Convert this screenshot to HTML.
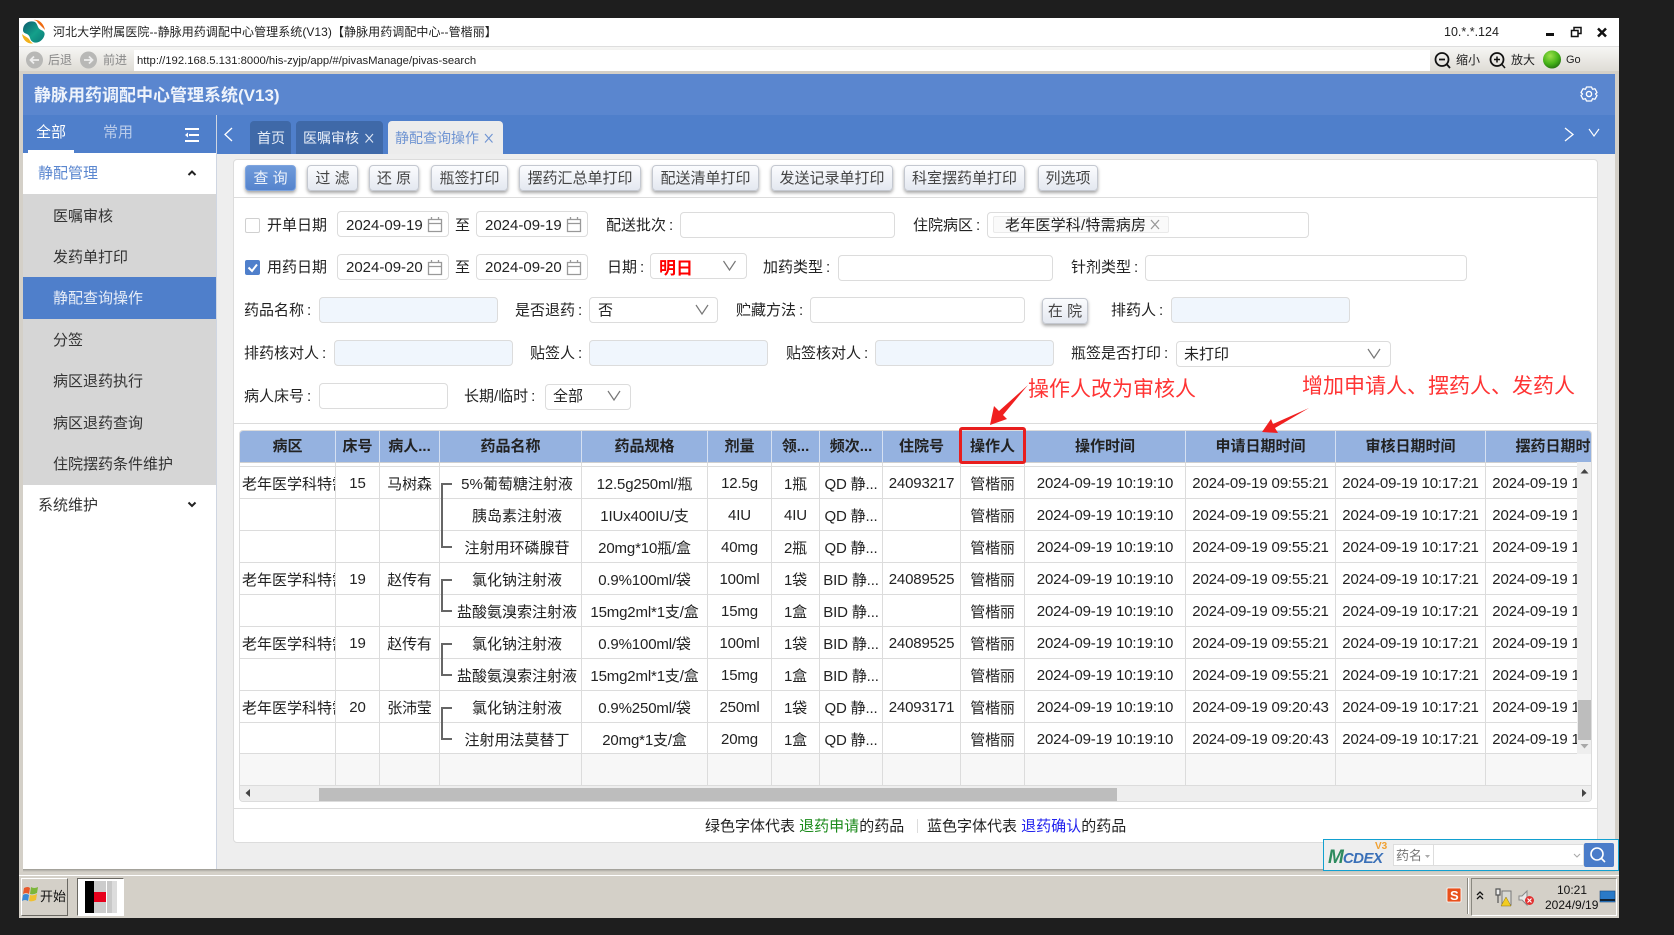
<!DOCTYPE html>
<html lang="zh"><head><meta charset="utf-8"><title>静脉用药调配中心管理系统</title>
<style>
html,body{margin:0;padding:0;width:1674px;height:935px;overflow:hidden;background:#1e1e1e}
body{position:relative;font-family:"Liberation Sans","Noto Sans CJK SC",sans-serif;font-size:15px;color:#222}
div,span.a{box-sizing:border-box}
.b{position:absolute}
.t{position:absolute;white-space:nowrap;line-height:20px;height:20px;margin-top:1px}
.i{position:absolute;background:#fff;border:1px solid #dcdcdc;border-radius:4px;height:26px}
.q{background:#f0f6fd}
.btn{position:absolute;top:165px;height:26px;border:1px solid #c4c8d0;border-radius:4px;background:linear-gradient(#fbfcfe,#e4e8f0);box-shadow:0 2px 3px rgba(0,0,0,.35);text-align:center;line-height:26px;color:#444;white-space:nowrap}
.side{position:absolute;left:53px;white-space:nowrap;line-height:20px;color:#333;margin-top:1px}
table{border-collapse:separate;border-spacing:0;table-layout:fixed;width:1396px;position:absolute;left:0;top:0}
th{background:#95b2e0;height:31px;padding:0 0 2px;font-size:15px;font-weight:bold;color:#222;border-right:1px solid #d5e0f2;white-space:nowrap;overflow:hidden;box-sizing:border-box}
td{height:32px;padding:2px 0 0;border-right:1px solid #dcdcdc;border-bottom:1px solid #dcdcdc;text-align:center;white-space:nowrap;overflow:hidden;box-sizing:border-box;font-size:15px;letter-spacing:-.15px;color:#222}
tr.sp td{height:5px;padding:0;border-top:1px solid #d0d0d0}
tr.la td{height:31px}
tr.fo td{background:#f7f7f7;height:32px}
td.w{text-align:left;padding-left:2px;letter-spacing:0}
td.n{padding-left:13px;letter-spacing:0}
</style></head><body>

<!-- window chrome -->
<div class="b" style="left:19px;top:18px;width:1600px;height:900px;background:#d4d0c8"></div>
<div class="b" style="left:19px;top:18px;width:1600px;height:28px;background:#fff"></div>
<div class="b" style="left:19px;top:46px;width:1600px;height:1px;background:#dedede"></div>
<div class="b" style="left:19px;top:47px;width:1600px;height:27px;background:linear-gradient(#f6f6f4,#dcd9d2)"></div>
<div class="b" style="left:19px;top:71px;width:1600px;height:3px;background:#d4d0c8"></div>
<div class="b" style="left:134px;top:50px;width:1296px;height:21px;background:#fff"></div>

<div class="t" style="left:53px;top:21px;font-size:12px;letter-spacing:.06px;color:#222">河北大学附属医院--静脉用药调配中心管理系统(V13)【静脉用药调配中心--管楷丽】</div>
<div class="t" style="left:1444px;top:21px;font-size:12.5px;color:#222">10.*.*.124</div>
<div class="t" style="left:48px;top:49px;font-size:12px;color:#888">后退</div>
<div class="t" style="left:103px;top:49px;font-size:12px;color:#888">前进</div>
<div class="t" style="left:137px;top:50px;font-size:11.3px;color:#222">http://192.168.5.131:8000/his-zyjp/app/#/pivasManage/pivas-search</div>
<div class="t" style="left:1456px;top:49px;font-size:12px;color:#222">缩小</div>
<div class="t" style="left:1511px;top:49px;font-size:12px;color:#222">放大</div>
<div class="t" style="left:1566px;top:49px;font-size:11px;color:#222">Go</div>

<!-- app frame -->
<div class="b" style="left:23px;top:74px;width:1592px;height:41px;background:#5a86cf"></div>
<div class="b" style="left:23px;top:115px;width:1592px;height:39px;background:#4f7fcb"></div>
<div class="b" style="left:23px;top:154px;width:1592px;height:715px;background:#eeeeee"></div>
<div class="b" style="left:23px;top:869px;width:1592px;height:3px;background:linear-gradient(#9b9992,#d4d0c8)"></div>
<div class="b" style="left:19px;top:875px;width:1600px;height:1px;background:#fff"></div>
<div class="t" style="left:34px;top:85px;font-size:17px;font-weight:bold;color:#eef3fb">静脉用药调配中心管理系统(V13)</div>

<!-- sidebar -->
<div class="b" style="left:23px;top:153px;width:193px;height:716px;background:#fff"></div>
<div class="b" style="left:216px;top:115px;width:1px;height:754px;background:#cfd6e2"></div>
<div class="b" style="left:23px;top:194px;width:193px;height:291px;background:#d6d6d6"></div>
<div class="b" style="left:23px;top:277px;width:193px;height:42px;background:#4f7fcb"></div>
<div class="b" style="left:28px;top:150px;width:46px;height:3px;background:#fff"></div>
<div class="t" style="left:36px;top:122px;color:#fff">全部</div>
<div class="t" style="left:103px;top:122px;color:#b9cbea">常用</div>
<div class="side" style="left:38px;top:163px;color:#5a86cf">静配管理</div>
<div class="side" style="top:206px">医嘱审核</div>
<div class="side" style="top:247px">发药单打印</div>
<div class="side" style="top:288px;color:#e8eef8">静配查询操作</div>
<div class="side" style="top:330px">分签</div>
<div class="side" style="top:371px">病区退药执行</div>
<div class="side" style="top:413px">病区退药查询</div>
<div class="side" style="top:454px">住院摆药条件维护</div>
<div class="side" style="left:38px;top:495px">系统维护</div>

<!-- tabs -->
<div class="b" style="left:250px;top:121px;width:41px;height:33px;background:#3f69a8;border-radius:4px 4px 0 0"></div>
<div class="b" style="left:296px;top:121px;width:87px;height:33px;background:#3f69a8;border-radius:4px 4px 0 0"></div>
<div class="b" style="left:388px;top:121px;width:115px;height:33px;background:#ececec;border-radius:4px 4px 0 0"></div>
<div class="t" style="left:257px;top:127px;font-size:14px;color:#e8eef8">首页</div>
<div class="t" style="left:303px;top:127px;font-size:14px;color:#e8eef8">医嘱审核</div>
<div class="t" style="left:395px;top:127px;font-size:14px;color:#6f94d2">静配查询操作</div>

<!-- card -->
<div class="b" style="left:233px;top:159px;width:1365px;height:684px;background:#fff;border:1px solid #dcdcdc;border-radius:4px"></div>
<div class="b" style="left:234px;top:197px;width:1363px;height:1px;background:#dcdcdc"></div>
<div class="b" style="left:234px;top:423px;width:1363px;height:1px;background:#dcdcdc"></div>
<div class="b" style="left:234px;top:808px;width:1363px;height:1px;background:#dcdcdc"></div>

<div class="btn" style="left:245px;width:51px;background:linear-gradient(#6f9ada,#5584cd);border-color:#7ea4de;color:#eef3fb">查 询</div>
<div class="btn" style="left:307px;width:51px">过 滤</div>
<div class="btn" style="left:369px;width:50px">还 原</div>
<div class="btn" style="left:431px;width:77px">瓶签打印</div>
<div class="btn" style="left:519px;width:122px">摆药汇总单打印</div>
<div class="btn" style="left:652px;width:107px">配送清单打印</div>
<div class="btn" style="left:771px;width:122px">发送记录单打印</div>
<div class="btn" style="left:904px;width:121px">科室摆药单打印</div>
<div class="btn" style="left:1038px;width:60px">列选项</div>

<!-- form row 1 -->
<div class="b" style="left:245px;top:218px;width:15px;height:15px;background:#fff;border:1px solid #d0d0d0;border-radius:2px"></div>
<div class="t" style="left:267px;top:215px">开单日期</div>
<div class="i" style="left:337px;top:211px;width:112px"></div>
<div class="t" style="left:346px;top:215px">2024-09-19</div>
<div class="t" style="left:455px;top:215px">至</div>
<div class="i" style="left:476px;top:211px;width:112px"></div>
<div class="t" style="left:485px;top:215px">2024-09-19</div>
<div class="t" style="left:606px;top:215px">配送批次&#8201;:</div>
<div class="i" style="left:680px;top:212px;width:215px"></div>
<div class="t" style="left:913px;top:215px">住院病区&#8201;:</div>
<div class="i" style="left:987px;top:212px;width:322px"></div>
<div class="b" style="left:993px;top:216px;width:176px;height:17px;background:#fafafa;border:1px solid #eaeaea;border-radius:2px"></div>
<div class="t" style="left:1005px;top:215px;letter-spacing:.2px">老年医学科/特需病房</div>

<!-- form row 2 -->
<div class="b" style="left:245px;top:260px;width:15px;height:15px;background:#4f7fcb;border-radius:2px"></div>
<div class="t" style="left:267px;top:257px">用药日期</div>
<div class="i" style="left:337px;top:254px;width:112px"></div>
<div class="t" style="left:346px;top:257px">2024-09-20</div>
<div class="t" style="left:455px;top:257px">至</div>
<div class="i" style="left:476px;top:254px;width:112px"></div>
<div class="t" style="left:485px;top:257px">2024-09-20</div>
<div class="t" style="left:607px;top:257px">日期&#8201;:</div>
<div class="i" style="left:650px;top:253px;width:97px"></div>
<div class="t" style="left:659px;top:258px;font-size:17px;font-weight:bold;color:#f00">明日</div>
<div class="t" style="left:763px;top:257px">加药类型&#8201;:</div>
<div class="i" style="left:838px;top:255px;width:215px"></div>
<div class="t" style="left:1071px;top:257px">针剂类型&#8201;:</div>
<div class="i" style="left:1145px;top:255px;width:322px"></div>

<!-- form row 3 -->
<div class="t" style="left:244px;top:300px">药品名称&#8201;:</div>
<div class="i q" style="left:319px;top:297px;width:179px"></div>
<div class="t" style="left:515px;top:300px">是否退药&#8201;:</div>
<div class="i" style="left:589px;top:297px;width:129px"></div>
<div class="t" style="left:598px;top:300px">否</div>
<div class="t" style="left:736px;top:300px">贮藏方法&#8201;:</div>
<div class="i" style="left:810px;top:297px;width:215px"></div>
<div class="btn" style="left:1042px;top:298px;width:46px">在 院</div>
<div class="t" style="left:1111px;top:300px">排药人&#8201;:</div>
<div class="i q" style="left:1171px;top:297px;width:179px"></div>

<!-- form row 4 -->
<div class="t" style="left:244px;top:343px">排药核对人&#8201;:</div>
<div class="i q" style="left:334px;top:340px;width:179px"></div>
<div class="t" style="left:530px;top:343px">贴签人&#8201;:</div>
<div class="i q" style="left:589px;top:340px;width:179px"></div>
<div class="t" style="left:786px;top:343px">贴签核对人&#8201;:</div>
<div class="i q" style="left:875px;top:340px;width:179px"></div>
<div class="t" style="left:1071px;top:343px">瓶签是否打印&#8201;:</div>
<div class="i" style="left:1176px;top:341px;width:215px"></div>
<div class="t" style="left:1184px;top:344px">未打印</div>

<!-- form row 5 -->
<div class="t" style="left:244px;top:386px">病人床号&#8201;:</div>
<div class="i" style="left:319px;top:383px;width:129px"></div>
<div class="t" style="left:464px;top:386px">长期/临时&#8201;:</div>
<div class="i" style="left:545px;top:384px;width:86px"></div>
<div class="t" style="left:553px;top:386px">全部</div>

<!-- grid -->
<div class="b" style="left:239px;top:430px;width:1353px;height:372px;border:1px solid #dcdcdc;border-radius:4px;overflow:hidden;background:#fff">
<table>
<colgroup><col style="width:96px"><col style="width:44px"><col style="width:60px"><col style="width:142px"><col style="width:126px"><col style="width:64px"><col style="width:48px"><col style="width:63px"><col style="width:78px"><col style="width:64px"><col style="width:161px"><col style="width:150px"><col style="width:150px"><col style="width:150px"></colgroup>
<tr><th>病区</th><th>床号</th><th>病人...</th><th>药品名称</th><th>药品规格</th><th>剂量</th><th>领...</th><th>频次...</th><th>住院号</th><th>操作人</th><th>操作时间</th><th>申请日期时间</th><th>审核日期时间</th><th>摆药日期时间</th></tr>
<tr class="sp"><td></td><td></td><td></td><td></td><td></td><td></td><td></td><td></td><td></td><td></td><td></td><td></td><td></td><td></td></tr>
<tr><td class="w">老年医学科特需病房</td><td>15</td><td>马树森</td><td class="n">5%葡萄糖注射液</td><td>12.5g250ml/瓶</td><td>12.5g</td><td>1瓶</td><td>QD 静...</td><td>24093217</td><td>管楷丽</td><td>2024-09-19 10:19:10</td><td>2024-09-19 09:55:21</td><td>2024-09-19 10:17:21</td><td>2024-09-19 10:19:10</td></tr>
<tr><td></td><td></td><td></td><td class="n">胰岛素注射液</td><td>1IUx400IU/支</td><td>4IU</td><td>4IU</td><td>QD 静...</td><td></td><td>管楷丽</td><td>2024-09-19 10:19:10</td><td>2024-09-19 09:55:21</td><td>2024-09-19 10:17:21</td><td>2024-09-19 10:19:10</td></tr>
<tr><td></td><td></td><td></td><td class="n">注射用环磷腺苷</td><td>20mg*10瓶/盒</td><td>40mg</td><td>2瓶</td><td>QD 静...</td><td></td><td>管楷丽</td><td>2024-09-19 10:19:10</td><td>2024-09-19 09:55:21</td><td>2024-09-19 10:17:21</td><td>2024-09-19 10:19:10</td></tr>
<tr><td class="w">老年医学科特需病房</td><td>19</td><td>赵传有</td><td class="n">氯化钠注射液</td><td>0.9%100ml/袋</td><td>100ml</td><td>1袋</td><td>BID 静...</td><td>24089525</td><td>管楷丽</td><td>2024-09-19 10:19:10</td><td>2024-09-19 09:55:21</td><td>2024-09-19 10:17:21</td><td>2024-09-19 10:19:10</td></tr>
<tr><td></td><td></td><td></td><td class="n">盐酸氨溴索注射液</td><td>15mg2ml*1支/盒</td><td>15mg</td><td>1盒</td><td>BID 静...</td><td></td><td>管楷丽</td><td>2024-09-19 10:19:10</td><td>2024-09-19 09:55:21</td><td>2024-09-19 10:17:21</td><td>2024-09-19 10:19:10</td></tr>
<tr><td class="w">老年医学科特需病房</td><td>19</td><td>赵传有</td><td class="n">氯化钠注射液</td><td>0.9%100ml/袋</td><td>100ml</td><td>1袋</td><td>BID 静...</td><td>24089525</td><td>管楷丽</td><td>2024-09-19 10:19:10</td><td>2024-09-19 09:55:21</td><td>2024-09-19 10:17:21</td><td>2024-09-19 10:19:10</td></tr>
<tr><td></td><td></td><td></td><td class="n">盐酸氨溴索注射液</td><td>15mg2ml*1支/盒</td><td>15mg</td><td>1盒</td><td>BID 静...</td><td></td><td>管楷丽</td><td>2024-09-19 10:19:10</td><td>2024-09-19 09:55:21</td><td>2024-09-19 10:17:21</td><td>2024-09-19 10:19:10</td></tr>
<tr><td class="w">老年医学科特需病房</td><td>20</td><td>张沛莹</td><td class="n">氯化钠注射液</td><td>0.9%250ml/袋</td><td>250ml</td><td>1袋</td><td>QD 静...</td><td>24093171</td><td>管楷丽</td><td>2024-09-19 10:19:10</td><td>2024-09-19 09:20:43</td><td>2024-09-19 10:17:21</td><td>2024-09-19 10:19:10</td></tr>
<tr class="la"><td></td><td></td><td></td><td class="n">注射用法莫替丁</td><td>20mg*1支/盒</td><td>20mg</td><td>1盒</td><td>QD 静...</td><td></td><td>管楷丽</td><td>2024-09-19 10:19:10</td><td>2024-09-19 09:20:43</td><td>2024-09-19 10:17:21</td><td>2024-09-19 10:19:10</td></tr>
<tr class="fo"><td></td><td></td><td></td><td></td><td></td><td></td><td></td><td></td><td></td><td></td><td></td><td></td><td></td><td></td></tr>
</table>
<!-- scrollbars -->
<div class="b" style="left:1337px;top:31px;width:15px;height:292px;background:#eeeeee"></div>
<div class="b" style="left:1338px;top:269px;width:13px;height:40px;background:#bdbdbd"></div>
<div class="b" style="left:0;top:355px;width:1352px;height:16px;background:#eeeeee"></div>
<div class="b" style="left:79px;top:357px;width:798px;height:13px;background:#bdbdbd"></div>
</div>

<!-- footer legend -->
<div class="t" style="left:705px;top:816px;color:#222">绿色字体代表 <span style="color:#1a8a1a">退药申请</span>的药品</div>
<div class="b" style="left:917px;top:819px;width:1px;height:14px;background:#dcdcdc"></div>
<div class="t" style="left:927px;top:816px;color:#222">蓝色字体代表 <span style="color:#2222ee">退药确认</span>的药品</div>

<!-- annotations -->
<div class="b" style="left:959px;top:427px;width:67px;height:37px;border:3px solid #e81e1e;border-radius:3px"></div>
<div class="t" style="left:1028px;top:374px;height:30px;line-height:30px;font-size:21px;color:#ff3434">操作人改为审核人</div>
<div class="t" style="left:1302px;top:371px;height:30px;line-height:30px;font-size:21px;color:#ff3434">增加申请人、摆药人、发药人</div>

<!-- MCDEX panel -->
<div class="b" style="left:1323px;top:839px;width:296px;height:32px;background:#eeeeee;border:1px solid #12a0d0"></div>
<div class="t" style="left:1328px;top:847px;font-size:15px;font-weight:bold;font-style:italic;letter-spacing:-.5px;color:#2e8b5f"><span style="font-size:19px;letter-spacing:-1px">M</span><span style="color:#3a70b8">CDEX</span></div>
<div class="t" style="left:1375px;top:836px;font-size:10px;font-weight:bold;color:#f0a030">V3</div>
<div class="b" style="left:1393px;top:844px;width:41px;height:22px;background:#fff;border:1px solid #ddd"></div>
<div class="t" style="left:1396px;top:845px;font-size:13px;color:#777">药名</div>
<div class="b" style="left:1434px;top:844px;width:150px;height:22px;background:#fff;border:1px solid #ddd;border-left:0"></div>
<div class="b" style="left:1584px;top:843px;width:30px;height:24px;background:#4a7cc9;border-radius:2px"></div>

<!-- taskbar -->
<div class="b" style="left:21px;top:878px;width:47px;height:38px;background:#d4d0c8;border:1px solid;border-color:#fff #6a6862 #6a6862 #fff"></div>
<div class="t" style="left:40px;top:886px;font-size:13px;color:#111">开始</div>
<div class="b" style="left:77px;top:878px;width:47px;height:38px;background:#fff;border:1px solid;border-color:#6a6862 #fff #fff #6a6862"></div>
<div class="b" style="left:1471px;top:878px;width:146px;height:38px;border:1px solid;border-color:#8a8880 #fff #fff #8a8880"></div>
<div class="b" style="left:1467px;top:878px;width:1px;height:36px;background:#8a8880;box-shadow:1px 0 0 #fff"></div>
<div class="t" style="left:1557px;top:879px;font-size:12px;color:#111">10:21</div>
<div class="t" style="left:1545px;top:894px;font-size:12px;color:#111">2024/9/19</div>

<!-- icons -->
<svg class="b" style="left:0;top:0" width="1674" height="935" viewBox="0 0 1674 935" fill="none">
 <!-- app logo -->
 <defs>
  <linearGradient id="lt" x1="0" y1="0" x2="1" y2="1"><stop offset="0" stop-color="#0c5a6e"/><stop offset=".55" stop-color="#14a08a"/><stop offset="1" stop-color="#0b7a78"/></linearGradient>
  <radialGradient id="g" cx=".4" cy=".3" r=".75"><stop offset="0" stop-color="#9be04a"/><stop offset=".6" stop-color="#46b318"/><stop offset="1" stop-color="#236e10"/></radialGradient>
 </defs>
 <path d="M23 30C23 23 30 20 35 22C38 24 37 28 41 30C44 31 45 33 44.500 35C43 41 37 44 33 42C29 40 31 36 27 34C24 33 23 32 23 30Z" fill="url(#lt)"/>
 <path d="M34 20C39 19 44 24 45 30C42 27 40 25 38 23C37 21 36 20.500 34 20Z" fill="#ee6a10"/>
 <path d="M22 34C24 36 27 37 29 39C30 41 31 42 33 43.500C27 44 23 40 22 34Z" fill="#f2b11c"/>

 <!-- window buttons -->
 <rect x="1546" y="33" width="8" height="3" fill="#111"/>
 <path d="M1574 30.500V27.500H1581V33.500H1578M1571.500 30.500H1578V36.500H1571.500Z" stroke="#111" stroke-width="1.500"/>
 <path d="M1598 28.500L1606 36.500M1606 28.500L1598 36.500" stroke="#111" stroke-width="2.500"/>

 <!-- back / forward -->
 <circle cx="34.500" cy="60" r="8.500" fill="#b8b8b6"/><path d="M39 60H31M34 56.500L30.500 60L34 63.500" stroke="#eee" stroke-width="1.800"/>
 <circle cx="88.500" cy="60" r="8.500" fill="#b8b8b6"/><path d="M84 60H92M89 56.500L92.500 60L89 63.500" stroke="#eee" stroke-width="1.800"/>
 <!-- zoom -->
 <circle cx="1442" cy="59.500" r="6.500" stroke="#111" stroke-width="1.800"/><path d="M1439 59.500H1445M1447 64.500L1450 68" stroke="#111" stroke-width="1.800"/>
 <circle cx="1497" cy="59.500" r="6.500" stroke="#111" stroke-width="1.800"/><path d="M1494 59.500H1500M1497 56.500V62.500M1502 64.500L1505 68" stroke="#111" stroke-width="1.500"/>
 <circle cx="1552" cy="59.500" r="9" fill="url(#g)"/>

 <!-- gear -->
 <circle cx="1589" cy="94" r="2.600" stroke="#fff" stroke-width="1.400"/>
 <path d="M1586.500 87L1591.500 87L1592.500 89.300L1595 88.800L1597 92.500L1595.500 94L1597 95.500L1595 99.200L1592.500 98.700L1591.500 101L1586.500 101L1585.500 98.700L1583 99.200L1581 95.500L1582.500 94L1581 92.500L1583 88.800L1585.500 89.300Z" stroke="#fff" stroke-width="1.300" stroke-linejoin="round"/>

 <!-- sidebar menu icon + chevrons -->
 <path d="M185 129H199M189 135H199M185 141H199" stroke="#fff" stroke-width="2"/><path d="M188 132.500L185 135L188 137.500Z" fill="#fff"/>
 <path d="M188.500 175L192 171.500L195.500 175" stroke="#222" stroke-width="2"/>
 <path d="M188.500 502.500L192 506L195.500 502.500" stroke="#222" stroke-width="2"/>
 <path d="M232 128L225 134.500L232 141" stroke="#fff" stroke-width="1.300"/>
 <path d="M1565 128L1573 134.500L1565 141" stroke="#fff" stroke-width="1.300"/>
 <path d="M1589 129L1594 136L1599 129" stroke="#fff" stroke-width="1.100"/>
 <!-- tab close -->
 <path d="M365.500 134L373 142.500M373 134L365.500 142.500" stroke="#dfe7f5" stroke-width="1.100"/>
 <path d="M485 134L492.500 142.500M492.500 134L485 142.500" stroke="#6f94d2" stroke-width="1.100"/>

 <!-- checkbox tick -->
 <path d="M248.500 267.500L252 271L257 264.500" stroke="#fff" stroke-width="2"/>

 <!-- calendars -->
 <g stroke="#999" stroke-width="1.300">
  <path d="M428.500 219.500H441.500V231.500H428.500ZM428.500 223.500H441.500M431.500 217V220M438.500 217V220"/>
  <path d="M567.500 219.500H580.500V231.500H567.500ZM567.500 223.500H580.500M570.500 217V220M577.500 217V220"/>
  <path d="M428.500 262.500H441.500V274.500H428.500ZM428.500 266.500H441.500M431.500 260V263M438.500 260V263"/>
  <path d="M567.500 262.500H580.500V274.500H567.500ZM567.500 266.500H580.500M570.500 260V263M577.500 260V263"/>
 </g>
 <!-- select chevrons -->
 <g stroke="#777" stroke-width="1.200">
  <path d="M723.500 261L729.500 270L735.500 261"/>
  <path d="M696 305L702 314L708 305"/>
  <path d="M1368 349L1374 358L1380 349"/>
  <path d="M608 391L614 400L620 391"/>
 </g>
 <path d="M1151 220L1159 229M1159 220L1151 229" stroke="#999" stroke-width="1.300"/>

 <!-- tree brackets -->
 <g stroke="#666" stroke-width="2">
  <path d="M452 484H442V547H452"/>
  <path d="M452 580H442V611H452"/>
  <path d="M452 644H442V675H452"/>
  <path d="M452 708H442V739H452"/>
 </g>

 <!-- scrollbar arrows -->
 <path d="M1580.500 473.500L1584.500 469L1588.500 473.500Z" fill="#444"/>
 <path d="M1580.500 744L1584.500 748.500L1588.500 744Z" fill="#a8a8a8"/>
 <path d="M250 789V797L245.500 793Z" fill="#444"/>
 <path d="M1582 789V797L1586.500 793Z" fill="#444"/>

 <!-- red arrows -->
 <path d="M1028 385L1003 415L1007 419L990 425L994 406L999 411Z" fill="#f02020"/>
 <path d="M1309 408L1275 428L1278 433L1262 432L1271 419L1273 424Z" fill="#f02020"/>

 <!-- mcdex search -->
 <circle cx="1597" cy="854" r="6" stroke="#fff" stroke-width="1.600"/><path d="M1601.500 858.500L1605 862" stroke="#fff" stroke-width="1.600"/>
 <path d="M1425 855L1430 855L1427.500 858Z" fill="#aaa"/><path d="M1574 854L1577 857L1580 854" stroke="#aaa" stroke-width="1.100"/>

 <!-- start flag -->
 <path d="M24 888Q28 886 30 888L29 894Q26 892 23 894Z" fill="#e8582a"/>
 <path d="M31 887Q34 889 38 887L37 893Q33 895 30 894Z" fill="#7cb63a"/>
 <path d="M23 895Q26 893 29 895L28 901Q25 899 22 901Z" fill="#3a8ad8"/>
 <path d="M30 895Q33 896 37 894L36 900Q32 902 29 901Z" fill="#f0c030"/>

 <!-- task icon -->
 <rect x="85" y="881" width="9" height="32" fill="#000"/>
 <path d="M95 881V913M97 881V913M99 881V913M101 881V913M103 881V913M105 881V913" stroke="#999" stroke-width="1"/>
 <rect x="107" y="881" width="5" height="32" fill="#c8c8c8"/>
 <rect x="112" y="881" width="5" height="32" fill="#dcdcdc"/>
 <rect x="94" y="892" width="12" height="10" fill="#e8001c"/>

 <!-- tray -->
 <rect x="1447" y="888" width="14" height="14" rx="1" fill="#e8501c" stroke="#fff" stroke-width=".8"/>
 <text x="1450" y="900" font-family="Liberation Sans" font-size="13" font-weight="bold" fill="#fff">S</text>
 <path d="M1477 895L1480 892L1483 895M1477 899L1480 896L1483 899" stroke="#111" stroke-width="1.300"/>
 <rect x="1502" y="891" width="9" height="14" fill="#d8d8d4" stroke="#777"/>
 <path d="M1496 889H1500V895H1496ZM1498 895V903" stroke="#555" stroke-width="1.200" fill="#eee"/>
 <path d="M1506 897L1511 906H1501Z" fill="#f2cc20" stroke="#8a7010" stroke-width=".5"/>
 <path d="M1519 896H1522L1527 891V905L1522 900H1519Z" fill="#e8e8e8" stroke="#888"/>
 <circle cx="1529.500" cy="900.500" r="4.500" fill="#e23030"/><path d="M1527.500 898.500L1531.500 902.500M1531.500 898.500L1527.500 902.500" stroke="#fff" stroke-width="1.200"/>
 <rect x="1600" y="891" width="15" height="11" fill="#2a7ac8" stroke="#1a4a80" stroke-width=".6"/><rect x="1600" y="899" width="15" height="2" fill="#123"/>
</svg>
</body></html>
